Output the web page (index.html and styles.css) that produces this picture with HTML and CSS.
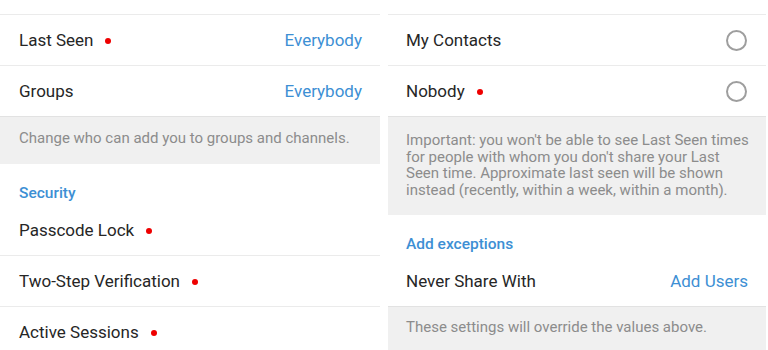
FILE: index.html
```html
<!DOCTYPE html>
<html lang="en">
<head>
    <meta charset="UTF-8">
    <meta name="viewport" content="width=device-width, initial-scale=1.0">
    <title>Privacy and Security</title>
    <link rel="stylesheet" href="styles.css">
</head>
<body>

    <div class="screens">
        <!-- Privacy and Security list -->
        <div class="panel">
            <div class="row row-top"></div>
            <div class="row">
                <span class="label">Last Seen <i class="dot"></i></span>
                <span class="value">Everybody</span>
            </div>
            <div class="row no-line">
                <span class="label">Groups</span>
                <span class="value">Everybody</span>
            </div>
            <div class="info">Change who can add you to groups and channels.</div>
            <div class="header">Security</div>
            <div class="row">
                <span class="label">Passcode Lock <i class="dot"></i></span>
            </div>
            <div class="row">
                <span class="label">Two-Step Verification <i class="dot"></i></span>
            </div>
            <div class="row no-line">
                <span class="label">Active Sessions <i class="dot"></i></span>
            </div>
        </div>

        <!-- Last Seen screen -->
        <div class="panel">
            <div class="row row-top">
                <span></span>
                <span class="radio checked"></span>
            </div>
            <div class="row">
                <span class="label">My Contacts</span>
                <span class="radio"></span>
            </div>
            <div class="row no-line">
                <span class="label">Nobody <i class="dot"></i></span>
                <span class="radio"></span>
            </div>
            <div class="info info-long">Important: you won't be able to see Last Seen times for people with whom you don't share your Last Seen time. Approximate last seen will be shown instead (recently, within a week, within a month).</div>
            <div class="header">Add exceptions</div>
            <div class="row no-line">
                <span class="label">Never Share With</span>
                <span class="value">Add Users</span>
            </div>
            <div class="info info-bottom">These settings will override the values above.</div>
        </div>
    </div>

</body>
</html>
```

FILE: styles.css
```css
body {
    margin: 0;
    background-color: #ffffff;
    font-family: Roboto, "Noto Sans", Arial, sans-serif;
    color: #262626;
    overflow: hidden;
}
.screens {
    display: grid;
    grid-template-columns: 380px 378px;
    column-gap: 8px;
    margin-top: -36px;
}
.panel {
    display: flex;
    flex-direction: column;
}
.row {
    height: 50px;
    display: flex;
    align-items: center;
    justify-content: space-between;
    padding: 0 18px 0 19px;
    border-bottom: 1px solid #ebebeb;
    font-size: 17px;
}
.row.no-line {
    border-bottom: none;
}
.label {
    display: flex;
    align-items: center;
}
.value {
    color: #3d8fd4;
}
.dot {
    display: inline-block;
    width: 6px;
    height: 6px;
    border-radius: 50%;
    background-color: #ee0000;
    margin-left: 12px;
    margin-top: 2px;
}
.radio {
    width: 17px;
    height: 17px;
    border: 2px solid #9e9e9e;
    border-radius: 50%;
    margin-right: 1px;
}
.radio.checked {
    border-color: #f0a040;
}
.info {
    background-color: #f0f0f0;
    border-top: 1px solid #e2e2e2;
    color: #8c8c8c;
    font-size: 15px;
    line-height: 16.5px;
    padding: 13px 19px 17px 19px;
    height: 17px;
}
.info-long {
    height: 66px;
    padding: 15px 16px 17px 18px;
}
.info-bottom {
    height: 40px;
    padding: 12px 18px 0 18px;
}
.header {
    height: 41px;
    padding: 20px 19px 0 19px;
    box-sizing: border-box;
    font-size: 15.5px;
    font-weight: 500;
    color: #3d8fd4;
}
.panel + .panel .row,
.panel + .panel .header {
    padding-left: 18px;
}
```
